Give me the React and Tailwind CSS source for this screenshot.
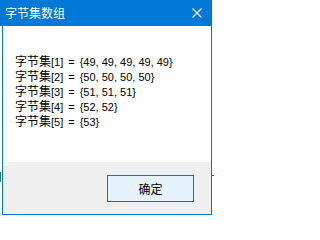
import React from 'react';

const rows = [
  { index: '[1]', value: '{49, 49, 49, 49, 49}' },
  { index: '[2]', value: '{50, 50, 50, 50}' },
  { index: '[3]', value: '{51, 51, 51}' },
  { index: '[4]', value: '{52, 52}' },
  { index: '[5]', value: '{53}' },
];

const font = { fontFamily: '"Liberation Sans", "Noto Sans CJK SC", sans-serif' };
const cjk = { fontFamily: '"Noto Sans CJK SC", sans-serif' };

const App = () => {
  return (
    <div className="relative w-[214px] h-[217px] bg-white overflow-hidden" style={font}>
      {/* title bar */}
      <div className="flex items-center justify-between w-[212px] h-[26px] bg-[#0078d7] text-white">
        <span className="pl-[5px] text-[12px] leading-none" style={cjk}>字节集数组</span>
        <svg width="10" height="10" viewBox="0 0 10 10" className="mr-[10px]">
          <path d="M0.5 0.5 L9.5 9.5 M9.5 0.5 L0.5 9.5" stroke="#fff" strokeWidth="1.1" />
        </svg>
      </div>

      {/* body */}
      <div className="ml-[2px] w-[210px] h-[189px] flex flex-col border-x border-b border-[#0078d7]">
        <div className="h-[136px] bg-white pt-[29px] pl-[12px] text-black text-[11px] leading-[15px]">
          {rows.map((r) => (
            <div key={r.index} className="flex items-baseline whitespace-pre h-[15px]">
              <span className="text-[12px]">字节集</span>
              <span>{r.index}</span>
              <span className="pl-[5px]">=</span>
              <span className="pl-[5px]">{r.value}</span>
            </div>
          ))}
        </div>
        <div className="flex-1 bg-[#f0f0f0] flex justify-end pt-[13px] pr-[17px]">
          <button className="w-[87px] h-[27px] border border-[#0078d7] bg-[#e5f1fb] text-[12px] text-black leading-none" style={cjk}>
            确定
          </button>
        </div>
      </div>

      {/* edge slivers of neighbouring windows */}
      <div className="absolute left-0 top-[172px] w-[1px] h-[10px] bg-[#1e7f7a]" />
      <div className="absolute left-[212px] top-[175px] w-[2px] h-[1px] bg-[#0078d7]" />
    </div>
  );
};

export default App;
